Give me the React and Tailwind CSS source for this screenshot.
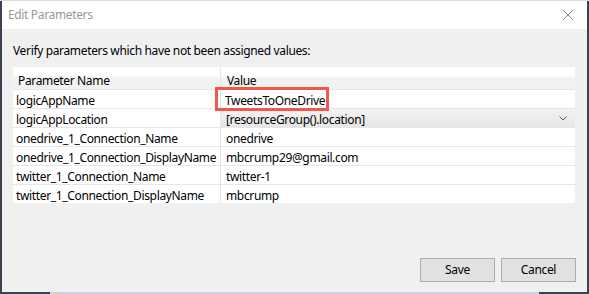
import React from "react";

const rows = [
  ["logicAppName", "TweetsToOneDrive"],
  ["logicAppLocation", "[resourceGroup().location]"],
  ["onedrive_1_Connection_Name", "onedrive"],
  ["onedrive_1_Connection_DisplayName", "mbcrump29@gmail.com"],
  ["twitter_1_Connection_Name", "twitter-1"],
  ["twitter_1_Connection_DisplayName", "mbcrump"],
];

export default function App() {
  return (
    <div
      className="w-[589px] h-[294px] overflow-hidden flex flex-col bg-[#3b4350] text-[12px] tracking-[-0.35px] text-black"
      style={{ fontFamily: '"Noto Sans", "Open Sans", sans-serif' }}
    >
      <div className="h-[1px] bg-[#d8dde4] shrink-0" />
      <div className="flex-1 flex flex-col ml-[2px] mr-[2px]">
        {/* Title bar */}
        <div className="h-[28px] bg-white flex items-center justify-between pl-[6px] pr-[13px] shrink-0">
          <span className="text-[#9a9a9a] text-[12px] leading-none">Edit Parameters</span>
          <svg width="12" height="12" viewBox="0 0 12 12">
            <path d="M1 1 L11 11 M11 1 L1 11" stroke="#8a8a8a" strokeWidth="1" />
          </svg>
        </div>
        {/* Body */}
        <div className="flex-1 bg-[#f0f0f0] flex flex-col pl-[11px] pr-[12px]">
          <div className="h-[38px] flex items-center pt-[6px] leading-none">
            Verify parameters which have not been assigned values:
          </div>
          <div className="flex flex-col gap-[1px] bg-[#e6e6e6]">
            <div className="flex gap-[1px] h-[22px]">
              <div className="w-[207px] pl-[5px] pt-[5px] flex items-center bg-[linear-gradient(#ffffff_0%,#ffffff_35%,#f1f2f4_50%,#f1f2f4_100%)]">
                Parameter Name
              </div>
              <div className="flex-1 pl-[6px] pt-[5px] flex items-center bg-[linear-gradient(#ffffff_0%,#ffffff_40%,#f1f2f4_50%,#f1f2f4_100%)]">
                Value
              </div>
            </div>
            {rows.map(([name, value], i) => (
              <div key={name} className="flex gap-[1px] h-[18px]">
                <div className="w-[207px] pl-[3px] pt-[3px] flex items-center bg-white whitespace-nowrap overflow-hidden">
                  {name}
                </div>
                {i === 0 ? (
                  <div className="flex-1 bg-white flex items-center pt-[3px] relative">
                    <div className="absolute left-[-6px] top-[-3px] w-[114px] h-[24px] border-[3px] border-[#f25749]" />
                    <span className="pl-[4px]">{value}</span>
                  </div>
                ) : i === 1 ? (
                  <div className="flex-1 flex items-center justify-between pl-[5px] pr-[8px] bg-[linear-gradient(#f3f3f3,#e6e6e6)]">
                    <span className="pt-[3px]">{value}</span>
                    <svg width="8" height="5" viewBox="0 0 8 5">
                      <path d="M0.5 0.5 L4 4 L7.5 0.5" stroke="#555" strokeWidth="1" fill="none" />
                    </svg>
                  </div>
                ) : (
                  <div className="flex-1 pl-[5px] pt-[3px] flex items-center bg-white">{value}</div>
                )}
              </div>
            ))}
          </div>
          <div className="flex-1 flex items-end justify-end gap-[6px] pb-[10px] mr-[-1px]">
            <button className="w-[75px] h-[24px] bg-[#e1e1e1] border border-[#adadad] text-[12px] leading-none">
              Save
            </button>
            <button className="w-[75px] h-[24px] bg-[#e1e1e1] border border-[#adadad] text-[12px] leading-none">
              Cancel
            </button>
          </div>
        </div>
      </div>
      <div className="h-[2px] shrink-0 flex">
        <div className="w-[50px] bg-[#3b4350]" />
        <div className="w-[13px] bg-[#d0d0d0]" />
        <div className="flex-1 bg-[#c9d4e4]" />
        <div className="w-[50px] bg-[#3b4350]" />
      </div>
    </div>
  );
}
